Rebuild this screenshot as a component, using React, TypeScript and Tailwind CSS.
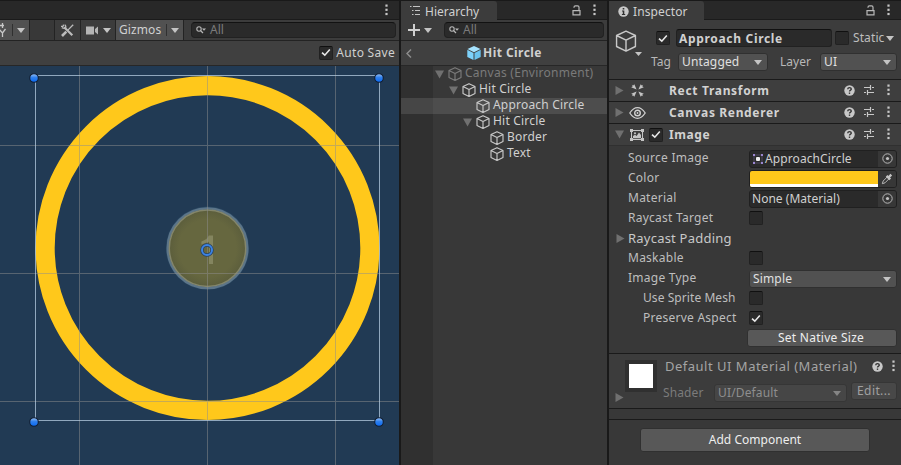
import type { ReactNode } from 'react';

const Tri = ({ className = 'text-[#c4c4c4]', w = 8, h = 5 }: { className?: string; w?: number; h?: number }) => (
  <svg width={w} height={h} viewBox="0 0 8 5" preserveAspectRatio="none" className={`shrink-0 ${className}`}>
    <path d="M0 0H8L4 5Z" fill="currentColor" />
  </svg>
);

const Fold = ({ open = false, className = '' }: { open?: boolean; className?: string }) => (
  <svg width="9" height="9" viewBox="0 0 9 9" className={`shrink-0 text-[#707070] ${className}`}>
    <path d={open ? 'M0 .5H9L4.5 8.5Z' : 'M.5 0V9L8.5 4.5Z'} fill="currentColor" />
  </svg>
);

const Cube = ({ size = 14, className = 'text-[#c8c8c8]' }: { size?: number; className?: string }) => (
  <svg width={size} height={size} viewBox="0 0 14 14" className={`shrink-0 ${className}`} fill="none" stroke="currentColor" strokeWidth={size > 14 ? 0.9 : 1.15} strokeLinejoin="round">
    <path d="M7 .7L13 3.5V10.5L7 13.4L1 10.5V3.5ZM1 3.5L7 6.4L13 3.5M7 6.4V13.4" />
  </svg>
);

const Dots = ({ className = '' }: { className?: string }) => (
  <svg width="3" height="12" viewBox="0 0 3 12" className={`shrink-0 ${className}`} fill="#c8c8c8">
    <rect x=".4" y=".5" width="2.2" height="2.2" />
    <rect x=".4" y="4.7" width="2.2" height="2.2" />
    <rect x=".4" y="8.9" width="2.2" height="2.2" />
  </svg>
);

const Lock = ({ className = '' }: { className?: string }) => (
  <svg width="9" height="11" viewBox="0 0 9 11" className={`shrink-0 ${className}`} fill="none" stroke="#b8b8b8" strokeWidth="1.2">
    <path d="M1 5.6H8V9.9H1ZM2 2.8V2.2Q2 .8 3.4 .8H5.6Q7 .8 7 2.2V5.4" />
  </svg>
);

const Check = ({ on = false, className = '' }: { on?: boolean; className?: string }) => (
  <span className={`flex h-[14px] w-[14px] shrink-0 items-center justify-center rounded-[2px] border border-[#212121] border-t-[#101010] bg-[#2a2a2a] ${className}`}>
    {on && (
      <svg width="10" height="9" viewBox="0 0 10 9" fill="none" stroke="#e8e8e8" strokeWidth="1.6">
        <path d="M1 4.6L3.8 7.2L8.8 1.4" />
      </svg>
    )}
  </span>
);

const Search = ({ className = '' }: { className?: string }) => (
  <div className={`flex h-4 items-center rounded-[4px] border border-[#212121] border-t-[#121212] bg-[#2a2a2a] ${className}`}>
    <svg width="10" height="8" viewBox="0 0 10 8" className="ml-[4px]" fill="none" stroke="#b8b8b8">
      <circle cx="3" cy="3" r="2.2" strokeWidth="1.1" />
      <path d="M4.6 4.6L7 7" strokeWidth="1.3" />
      <path d="M6 2.5H10L8 4.8Z" fill="#b8b8b8" stroke="none" />
    </svg>
    <span className="ml-[4px] text-[#7b7b7b]">All</span>
  </div>
);

const Help = ({ className = '' }: { className?: string }) => (
  <svg width="11" height="11" viewBox="0 0 11 11" className={`shrink-0 ${className}`}>
    <circle cx="5.5" cy="5.5" r="5.2" fill="#c8c8c8" />
    <path d="M3.7 4.3Q3.8 2.6 5.5 2.6T7.3 4.1Q7.3 4.9 6.3 5.4Q5.5 5.8 5.5 6.6" fill="none" stroke="#333" strokeWidth="1.4" />
    <rect x="4.8" y="7.5" width="1.4" height="1.4" fill="#333" />
  </svg>
);

const Preset = ({ className = '' }: { className?: string }) => (
  <svg width="10" height="10" viewBox="0 0 10 10" className={`shrink-0 ${className}`} fill="none" stroke="#c8c8c8" strokeWidth="1.2">
    <path d="M0 2.5H6.5M8 2.5H10M6.5 0V5M0 7.5H2M3.5 7.5H10M3.5 5V10" />
  </svg>
);

const Tree = ({ pad, label, open, selected, dim, track = 'tracking-[0.2px]' }: { pad: string; label: string; open?: boolean; selected?: boolean; dim?: boolean; track?: string }) => (
  <div className={`flex h-4 ${selected ? 'bg-[#4d4d4d]' : ''}`}>
    <div className={`w-8 shrink-0 ${selected ? 'bg-[#464646]' : 'bg-[#303030]'}`} />
    <div className={`flex items-center ${pad}`}>
      <span className="flex w-[13px] shrink-0">{open && <Fold open />}</span>
      <Cube className={dim ? 'text-[#7b7b7b]' : 'text-[#c8c8c8]'} />
      <span className={`-mt-[2px] ml-[3px] ${track} ${dim ? 'text-[#7a7a7a]' : ''}`}>{label}</span>
    </div>
  </div>
);

const Comp = ({ title, icon, open, check, track }: { title: string; icon: ReactNode; open?: boolean; check?: boolean; track: string }) => (
  <div className="flex h-[22px] items-center border-b border-[#1a1a1a] bg-[#3e3e3e]">
    <Fold open={open} className="ml-[6px]" />
    <span className="ml-[4px] flex w-[18px] shrink-0 justify-center">{icon}</span>
    <span className="flex w-[23px] shrink-0 pl-[3px]">{check && <Check on />}</span>
    <span className={`font-bold text-[#d2d2d2] ${track}`}>{title}</span>
    <Help className="-mt-px ml-auto" />
    <Preset className="-mt-px ml-[9px]" />
    <Dots className="-mt-px mr-[11px] ml-[13px]" />
  </div>
);

const Prop = ({ label, indent, track = 'tracking-[0.25px]', children }: { label: string; indent?: boolean; track?: string; children?: ReactNode }) => (
  <div className="flex h-5 items-center">
    <span className={`-mt-[2px] w-[140px] shrink-0 text-[#bebebe] ${indent ? 'pl-[34px]' : 'pl-[19px]'} ${track}`}>{label}</span>
    {children}
  </div>
);

const Field = ({ children }: { children: ReactNode }) => (
  <div className="flex h-[18px] w-[148px] items-center overflow-hidden rounded-[3px] border border-[#202020] bg-[#2a2a2a]">
    {children}
    <span className="ml-auto flex h-full w-[18px] items-center justify-center bg-[#373737] pb-px">
      <svg width="11" height="11" viewBox="0 0 11 11" fill="none" stroke="#b8b8b8">
        <circle cx="5.5" cy="5.5" r="4.7" />
        <circle cx="5.5" cy="5.5" r="1.6" fill="#c4c4c4" stroke="none" />
      </svg>
    </span>
  </div>
);

const Drop = ({ label, className, dim }: { label: string; className: string; dim?: boolean }) => (
  <div className={`flex h-[18px] items-center justify-between rounded-[3px] border pr-[5px] pl-[3px] tracking-[0.15px] ${dim ? 'border-[#363636] bg-[#464646] text-[#8e8e8e]' : 'border-[#303030] bg-[#515151] text-[#e0e0e0]'} ${className}`}>
    <span className="-mt-px whitespace-nowrap">{label}</span>
    <Tri className={dim ? 'text-[#858585]' : 'text-[#c4c4c4]'} />
  </div>
);

const Scene = () => (
  <svg width="399" height="399" viewBox="0 66 399 399" className="block bg-[#213a54]">
    <defs>
      <linearGradient id="handle" x1="0" y1="0" x2="0" y2="1">
        <stop offset="0" stopColor="#9cc4f6" />
        <stop offset=".45" stopColor="#2f80ee" />
        <stop offset="1" stopColor="#0868f2" />
      </linearGradient>
      <radialGradient id="disc">
        <stop offset=".75" stopColor="#66673f" />
        <stop offset="1" stopColor="#5c5e3c" />
      </radialGradient>
    </defs>
    <circle cx="207.5" cy="248" r="162.4" fill="none" stroke="#ffc81b" strokeWidth="19.2" />
    <circle cx="207.5" cy="248.2" r="41.6" fill="#2b4964" />
    <circle cx="207.5" cy="248.2" r="38.2" fill="url(#disc)" />
    <circle cx="207.5" cy="248.2" r="39.8" fill="none" stroke="#5c7589" strokeWidth="2.4" />
    <circle cx="207.5" cy="248.2" r="38.2" fill="none" stroke="#84866b" strokeWidth="1.5" />
    <path d="M208.8 235.5H213V264H209V241.8L201.4 244.6V241.4Q207.5 239.5 208.8 235.5Z" fill="#84855f" />
    <g stroke="#8d8d8d" strokeOpacity=".5" shapeRendering="crispEdges">
      <path d="M79.5 66V465M207.5 66V465M335.5 66V465M0 145.5H399M0 273.5H399M0 401.5H399" />
    </g>
    <path d="M35.5 75.5H379.5V420.5H35.5Z" fill="none" stroke="#bdd3e8" strokeOpacity=".72" shapeRendering="crispEdges" />
    {[[34, 78], [379, 78], [34, 422], [379, 422]].map(([x, y]) => (
      <circle key={`${x}-${y}`} cx={x} cy={y} r="4.3" fill="url(#handle)" stroke="#111d30" strokeWidth="1.1" />
    ))}
    <circle cx="207" cy="250" r="5" fill="none" stroke="#27405e" strokeWidth="3.4" />
    <circle cx="207" cy="250" r="5" fill="none" stroke="#3c83e2" strokeWidth="2" />
  </svg>
);

export default function App() {
  return (
    <div className="flex h-[465px] w-[901px] gap-[2px] overflow-hidden bg-[#191919] pt-px font-['Noto_Sans',sans-serif] text-[12px] leading-4 whitespace-nowrap text-[#d0d0d0]">
      <section className="w-[399px] shrink-0">
        <div className="flex h-[19px] items-center justify-end border-b border-[#1b1b1b] bg-[#282828]">
          <Dots className="mr-[11px]" />
        </div>
        <div className="flex h-[21px] items-center border-b border-[#232323] bg-[#3c3c3c]">
          <div className="flex h-full w-[30px] items-center border-r border-[#232323] bg-[#515151]">
            <svg width="6" height="14" viewBox="0 0 6 14" fill="none" stroke="#c8c8c8" strokeWidth="1.3">
              <path d="M0 2.5H4M2.5 0V5M-1 6L2.5 10L5.5 6M2.5 10V14" />
            </svg>
            <span className="ml-[6px] h-3 w-px bg-[#303030]" />
            <Tri className="ml-[4px] text-[#c4c4c4]" />
          </div>
          <div className="h-full w-[25px] border-r border-[#232323] bg-[#383838]" />
          <div className="flex h-full w-[26px] items-center justify-center border-r border-[#232323]">
            <svg width="13" height="13" viewBox="0 0 13 13" fill="none" stroke="#bcbcbc">
              <path d="M3.2 3.2L11.3 11.3" strokeWidth="2.2" />
              <path d="M2.2 .6Q3 3-.1 2.3M.8 3.6Q3.6 5 4.5 3.8Q5.4 2.4 3.7 .6" strokeWidth="1.3" />
              <path d="M1 12L5.3 7.7" strokeWidth="2.6" />
              <path d="M6.6 6.4L12.2 .8" strokeWidth="1.3" />
            </svg>
          </div>
          <div className="flex h-full w-[35px] items-center border-r border-[#232323] pl-[5px]">
            <svg width="13" height="9" viewBox="0 0 13 9" fill="#b4b4b4"><path d="M0 .5H8V8.5H0ZM9 3L12 .5V8.5L9 6Z" /></svg>
            <Tri className="ml-[4px] text-[#c4c4c4]" />
          </div>
          <div className="flex h-full w-[68px] items-center border-r border-[#232323] bg-[#515151] pl-[3px]">
            <span className="w-[43px] tracking-[0.1px]">Gizmos</span>
            <span className="ml-[4px] h-3 w-px bg-[#303030]" />
            <Tri className="ml-[4px] text-[#c4c4c4]" />
          </div>
          <Search className="ml-[7px] w-[205px]" />
        </div>
        <div className="flex h-[25px] items-center justify-end border-b border-[#272727] bg-[#404040] pr-[4px]">
          <Check on className="-mt-px mr-[3px]" />
          <span className="tracking-[0.3px]">Auto Save</span>
        </div>
        <Scene />
      </section>

      <section className="flex w-[206px] shrink-0 flex-col bg-[#383838]">
        <div className="flex h-[19px] bg-[#282828]">
          <div className="flex w-24 items-center rounded-tr-[3px] bg-[#3c3c3c] pt-[2px] pl-[9px]">
            <svg width="10" height="9" viewBox="0 0 10 9" fill="none" stroke="#c4c4c4" className="-mt-[2px]">
              <path d="M0 .5H1.5M3 .5H10M2 4.5H3.5M5 4.5H10M2 8.5H3.5M5 8.5H10" />
            </svg>
            <span className="ml-[5px]">Hierarchy</span>
          </div>
          <div className="flex flex-1 items-center border-b border-[#1b1b1b]">
            <Lock className="ml-[75px]" />
            <Dots className="ml-[12px]" />
          </div>
        </div>
        <div className="flex h-[21px] items-center border-b border-[#232323] bg-[#3c3c3c]">
          <svg width="12" height="12" viewBox="0 0 12 12" className="ml-[7px]"><path d="M6 0V12M0 6H12" stroke="#d0d0d0" strokeWidth="2" /></svg>
          <Tri className="mr-[8px] ml-[4px] text-[#c4c4c4]" />
          <Search className="ml-[4px] w-[160px]" />
        </div>
        <div className="flex h-[25px] items-center border-b border-[#272727] bg-[#404040]">
          <svg width="6" height="9" viewBox="0 0 6 9" className="ml-[5px]" fill="none" stroke="#8e8e8e" strokeWidth="1.4"><path d="M5 .5L1 4.5L5 8.5" /></svg>
          <svg width="14" height="14" viewBox="0 0 14 14" className="ml-[55px]">
            <path d="M7 0L13.5 3L7 6.2L.5 3Z" fill="#a5e3ff" />
            <path d="M.3 3.8L6.5 6.9V14L.3 11Z" fill="#7dd2fb" />
            <path d="M13.7 3.8L7.5 6.9V14L13.7 11Z" fill="#6bc3ee" />
          </svg>
          <span className="ml-[2px] font-bold tracking-[0.45px]">Hit Circle</span>
        </div>
        <Tree pad="pl-[2px]" label="Canvas (Environment)" open dim track="tracking-[0.27px]" />
        <Tree pad="pl-[16px]" label="Hit Circle" open />
        <Tree pad="pl-[30px]" label="Approach Circle" selected />
        <Tree pad="pl-[30px]" label="Hit Circle" open />
        <Tree pad="pl-[44px]" label="Border" />
        <Tree pad="pl-[44px]" label="Text" />
        <div className="w-8 flex-1 bg-[#303030]" />
      </section>

      <section className="flex w-[292px] shrink-0 flex-col bg-[#383838]">
        <div className="flex h-[19px] bg-[#282828]">
          <div className="flex w-[95px] items-center rounded-tr-[3px] bg-[#3c3c3c] pt-[2px] pl-[9px]">
            <svg width="11" height="11" viewBox="0 0 11 11" className="-mt-px">
              <circle cx="5.5" cy="5.5" r="5.2" fill="#c8c8c8" />
              <path d="M4.7 2H6.3V3.5H4.7ZM4 4.5H6.3V8H7.2V9H3.9V8H4.8V5.5H4Z" fill="#303030" />
            </svg>
            <span className="ml-[4px] tracking-[0.1px]">Inspector</span>
          </div>
          <div className="flex flex-1 items-center border-b border-[#1b1b1b]">
            <Lock className="ml-[162px]" />
            <Dots className="ml-[12px]" />
          </div>
        </div>
        <div className="flex h-[60px] border-b border-[#1a1a1a] bg-[#3c3c3c]">
          <div className="w-8 shrink-0 pt-[10px] pl-[6px]">
            <Cube size={22} />
            <Tri className="ml-[20px] text-[#c4c4c4]" w={7} h={4} />
          </div>
          <div className="flex-1">
            <div className="mt-[9px] flex h-[18px] items-center">
              <Check on className="ml-[15px]" />
              <div className="ml-[6px] flex h-[18px] w-[156px] items-center rounded-[3px] border border-[#212121] border-t-[#111] bg-[#2a2a2a] pl-[2px] pt-px font-bold tracking-[0.68px]">Approach Circle</div>
              <Check className="ml-[3px]" />
              <span className="ml-[4px] tracking-[0.1px] text-[#bebebe]">Static</span>
              <Tri className="ml-[2px] text-[#c4c4c4]" w={8} />
            </div>
            <div className="mt-[6px] flex h-[18px] items-center">
              <span className="ml-[10px] w-[27px] text-[#b8b8b8]">Tag</span>
              <Drop label="Untagged" className="w-[90px]" />
              <span className="ml-[12px] w-[40px] text-[#b8b8b8]">Layer</span>
              <Drop label="UI" className="w-[77px]" />
            </div>
          </div>
        </div>
        <Comp
          title="Rect Transform"
          track="tracking-[0.68px]"
          icon={
            <svg width="13" height="13" viewBox="0 0 13 13" fill="#c4c4c4">
              <path d="M5.6 5.6L.2 3.3L1.8 2.2L.8 .8L2.2 1.6L3.3 .2ZM7.4 5.6L12.8 3.3L11.2 2.2L12.2 .8L10.8 1.6L9.7 .2ZM5.6 7.4L.2 9.7L1.8 10.8L.8 12.2L2.2 11.4L3.3 12.8ZM7.4 7.4L12.8 9.7L11.2 10.8L12.2 12.2L10.8 11.4L9.7 12.8Z" />
            </svg>
          }
        />
        <Comp
          title="Canvas Renderer"
          track="tracking-[0.64px]"
          icon={
            <svg width="17" height="12" viewBox="0 0 17 12" className="shrink-0" fill="none" stroke="#d0d0d0">
              <path d="M.8 6Q4.3 .7 8.5 .7T16.2 6Q12.7 11.3 8.5 11.3T.8 6Z" strokeWidth="1.3" />
              <circle cx="8.5" cy="6" r="2.8" strokeWidth="1.4" />
              <circle cx="8.5" cy="6" r=".9" fill="#d0d0d0" stroke="none" />
            </svg>
          }
        />
        <div className="-mb-px">
          <Comp
            title="Image"
            track="tracking-[0.6px]"
            open
            check
            icon={
              <svg width="14" height="12" viewBox="0 0 14 12" fill="#c4c4c4">
                <path d="M1.5 1.5H12.5V10.5H1.5Z" fill="none" stroke="#c4c4c4" />
                <path d="M0 0H3V3H0ZM11 0H14V3H11ZM0 9H3V12H0ZM11 9H14V12H11Z" />
                <path d="M3 9.2V7L5 5.8L6.6 7L9 3.6L11 6V9.2Z" />
                <circle cx="5" cy="4.2" r="1" />
              </svg>
            }
          />
        </div>
        <div className="h-[209px] shrink-0 border-t border-b border-t-[#303030] border-b-[#1a1a1a] bg-[#383838] pt-[3px]">
          <Prop label="Source Image">
            <Field>
              <svg width="10" height="10" viewBox="0 0 10 10" className="ml-[3px]">
                <path d="M1 1H9V9H1Z" fill="none" stroke="#514a63" />
                <path d="M0 0H2V2H0ZM8 0H10V2H8ZM0 8H2V10H0ZM8 8H10V10H8Z" fill="#9b86d0" />
                <rect x="3" y="3" width="4" height="4" rx="1" fill="#eee" />
              </svg>
              <span className="ml-[2px] tracking-[0.1px]">ApproachCircle</span>
            </Field>
          </Prop>
          <Prop label="Color">
            <div className="flex h-[18px] w-[148px] overflow-hidden rounded-[3px] border border-[#202020]">
              <div className="w-[128px] border-b-[3px] border-white bg-[#ffc81b]" />
              <div className="flex flex-1 items-center justify-center bg-[#373737]">
                <svg width="12" height="12" viewBox="0 0 12 12">
                  <path d="M1.3 10.7L2.2 8L6.8 3.4L8.6 5.2L4 9.8Z" fill="none" stroke="#b8b8b8" />
                  <path d="M5.6 2.8L9.2 6.4M7.5 4.5L10.3 1.7" stroke="#c4c4c4" strokeWidth="2.4" />
                </svg>
              </div>
            </div>
          </Prop>
          <Prop label="Material">
            <Field><span className="ml-[2px] tracking-[0.02px]">None (Material)</span></Field>
          </Prop>
          <Prop label="Raycast Target"><Check className="-mt-[2px]" /></Prop>
          <div className="flex h-5 items-center">
            <Fold className="-mt-[2px] ml-[7px]" />
            <span className="-mt-[2px] ml-[3px] text-[13px] tracking-[0.22px] text-[#c8c8c8]">Raycast Padding</span>
          </div>
          <Prop label="Maskable"><Check className="-mt-[2px]" /></Prop>
          <Prop label="Image Type"><Drop label="Simple" className="w-[148px]" /></Prop>
          <Prop label="Use Sprite Mesh" indent track="tracking-[0.07px]"><Check className="-mt-[2px]" /></Prop>
          <Prop label="Preserve Aspect" indent><Check on className="-mt-[2px]" /></Prop>
          <div className="ml-[138px] flex h-[18px] w-[150px] items-center justify-center rounded-[3px] border border-[#303030] bg-[#585858] pr-[2px] tracking-[0.27px] text-[#eee]">Set Native Size</div>
        </div>
        <div className="flex h-[55px] shrink-0 border-b border-[#1a1a1a] bg-[#3c3c3c]">
          <Fold className="mt-[39px] ml-[6px]" />
          <div className="mt-[6px] ml-px h-8 w-8 shrink-0 border-4 border-[#303030] bg-white" />
          <div className="flex-1 pl-[6px]">
            <div className="mt-[4px] flex h-4 items-center">
              <span className="pl-[2px] text-[13px] tracking-[0.5px] text-[#a4a4a4]">Default UI Material (Material)</span>
              <Help className="ml-auto" />
              <Dots className="mr-[6px] ml-[9px]" />
            </div>
            <div className="mt-[8px] flex h-[22px]">
              <span className="mt-[3px] w-[51px] tracking-[0.1px] text-[#7b7b7b]">Shader</span>
              <Drop label="UI/Default" dim className="mt-[2px] w-[133px]" />
              <div className="ml-[4px] h-[18px] w-[46px] rounded-[3px] border border-[#363636] bg-[#484848] text-center tracking-[0.4px] text-[#a0a0a0]">Edit...</div>
            </div>
          </div>
        </div>
        <div className="h-[11px] shrink-0 border-b border-[#1a1a1a]" />
        <div className="mt-[8px] ml-[31px] flex h-6 w-[230px] shrink-0 items-center justify-center rounded-[3px] border border-[#303030] bg-[#585858] tracking-[0.02px] text-[#eee]">Add Component</div>
      </section>
    </div>
  );
}
